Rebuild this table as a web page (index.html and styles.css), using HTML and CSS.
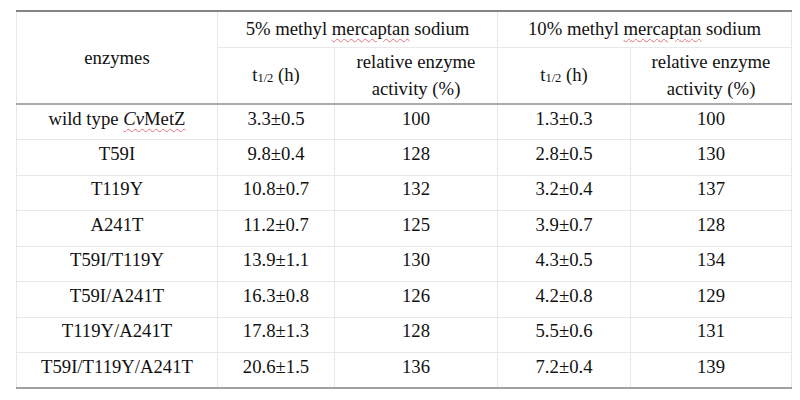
FILE: index.html
```html
<!DOCTYPE html>
<html lang="en">
<head>
<meta charset="utf-8">
<title>Enzyme stability table</title>
<link rel="stylesheet" href="styles.css">
</head>
<body>
<table class="data">
  <colgroup>
    <col class="c1"><col class="c2"><col class="c3"><col class="c4"><col class="c5">
  </colgroup>
  <thead>
    <tr class="h1">
      <th rowspan="2" class="enz">enzymes</th>
      <th colspan="2">5% methyl <span class="spell">mercaptan</span> sodium</th>
      <th colspan="2">10% methyl <span class="spell">mercaptan</span> sodium</th>
    </tr>
    <tr class="h2">
      <th>t<span class="sub">1/2</span> (h)</th>
      <th class="two">relative enzyme<br>activity (%)</th>
      <th>t<span class="sub">1/2</span> (h)</th>
      <th class="two">relative enzyme<br>activity (%)</th>
    </tr>
  </thead>
  <tbody>
    <tr><td>wild type <span class="spell"><i>Cv</i>MetZ</span></td><td>3.3±0.5</td><td>100</td><td>1.3±0.3</td><td>100</td></tr>
    <tr><td>T59I</td><td>9.8±0.4</td><td>128</td><td>2.8±0.5</td><td>130</td></tr>
    <tr><td>T119Y</td><td>10.8±0.7</td><td>132</td><td>3.2±0.4</td><td>137</td></tr>
    <tr><td>A241T</td><td>11.2±0.7</td><td>125</td><td>3.9±0.7</td><td>128</td></tr>
    <tr><td>T59I/T119Y</td><td>13.9±1.1</td><td>130</td><td>4.3±0.5</td><td>134</td></tr>
    <tr><td>T59I/A241T</td><td>16.3±0.8</td><td>126</td><td>4.2±0.8</td><td>129</td></tr>
    <tr><td>T119Y/A241T</td><td>17.8±1.3</td><td>128</td><td>5.5±0.6</td><td>131</td></tr>
    <tr><td>T59I/T119Y/A241T</td><td>20.6±1.5</td><td>136</td><td>7.2±0.4</td><td>139</td></tr>
  </tbody>
</table>
</body>
</html>
```
FILE: styles.css
```css
html, body {
  margin: 0;
  background: #ffffff;
}
body {
  padding: 10px 0 0 16px;
  font-family: "Liberation Serif", "Times New Roman", serif;
  font-size: 18.7px;
  color: #111111;
}
.data {
  border-collapse: collapse;
  table-layout: fixed;
  width: 775px;
  border-top: 2px solid #858585;
  border-left: 1px solid #e6e6e6;
  border-right: 1px solid #d6d6d6;
  border-bottom: 2px solid #a0a0a0;
}
.c1 { width: 201px; }
.c2 { width: 117px; }
.c3 { width: 163px; }
.c4 { width: 133px; }
.c5 { width: 161px; }

.data th,
.data td {
  padding: 0;
  text-align: center;
  font-weight: normal;
  border: 1px solid #e8e8e8;
  line-height: 24px;
  white-space: nowrap;
}
.data th {
  vertical-align: middle;
}
.data tr.h1 { height: 36px; }
.data tr.h2 { height: 57px; }
.data tr.h2 th,
.data th.enz {
  border-bottom: 2px solid #ababab;
}
.data th.two {
  line-height: 27.5px;
}
.data tbody tr { height: 35.5px; }
.data td {
  vertical-align: top;
  padding-top: 1.5px;
}
.sub {
  font-size: 12.5px;
  vertical-align: -1px;
  line-height: 0;
}
.spell {
  text-decoration: underline wavy #e3707c;
  text-decoration-thickness: 1px;
  text-underline-offset: 3px;
}
```
